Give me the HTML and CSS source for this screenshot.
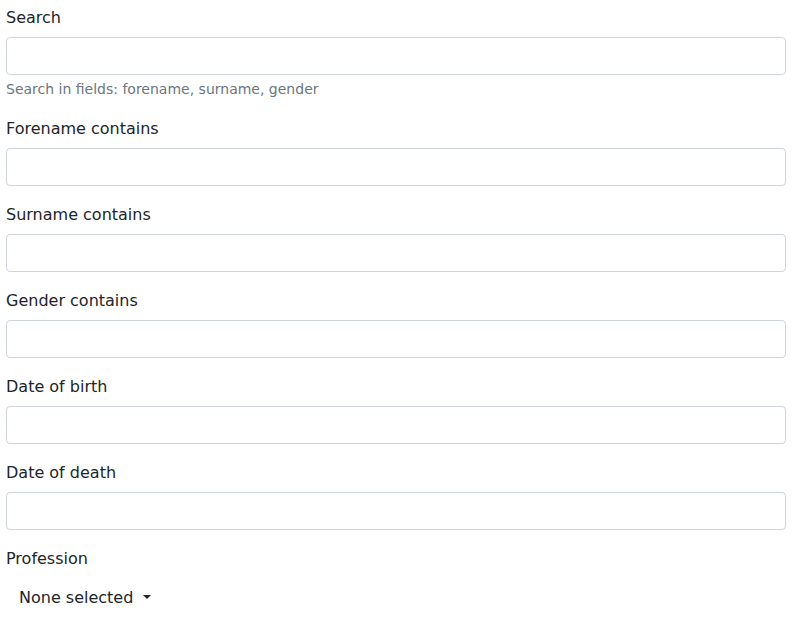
FILE: index.html
```html
<!DOCTYPE html>
<html lang="en">
<head>
<meta charset="utf-8">
<title>Filter</title>
<link rel="stylesheet" href="styles.css">
</head>
<body>
<form class="filter-form">
  <div class="field">
    <label class="field-label" for="search">Search</label>
    <input class="field-input" id="search" type="text">
    <div class="field-help">Search in fields: forename, surname, gender</div>
  </div>
  <div class="field">
    <label class="field-label" for="forename">Forename contains</label>
    <input class="field-input" id="forename" type="text">
  </div>
  <div class="field">
    <label class="field-label" for="surname">Surname contains</label>
    <input class="field-input" id="surname" type="text">
  </div>
  <div class="field">
    <label class="field-label" for="gender">Gender contains</label>
    <input class="field-input" id="gender" type="text">
  </div>
  <div class="field">
    <label class="field-label" for="dob">Date of birth</label>
    <input class="field-input" id="dob" type="text">
  </div>
  <div class="field">
    <label class="field-label" for="dod">Date of death</label>
    <input class="field-input" id="dod" type="text">
  </div>
  <div class="field">
    <label class="field-label">Profession</label>
    <div class="select-wrap">
      <button type="button" class="select-toggle">None selected</button>
    </div>
  </div>
</form>
</body>
</html>
```

FILE: styles.css
```css
* { box-sizing: border-box; }

html, body {
  margin: 0;
  padding: 0;
  background: #fff;
}

body {
  font-family: "DejaVu Sans", sans-serif;
  font-size: 16px;
  line-height: 1.5;
  color: #212529;
}

.filter-form {
  padding: 5px 7px 0 6px;
}

.field {
  margin-bottom: 16px;
}

.field-label {
  display: block;
  padding-top: 1px;
  height: 31px;
  margin-bottom: 1px;
}

.field-input {
  display: block;
  width: 100%;
  height: 38px;
  padding: 6px 12px;
  font: inherit;
  color: #212529;
  background: #fff;
  border: 1px solid #ced4da;
  border-radius: 4px;
}

.field-help {
  margin-top: 4px;
  font-size: 14px;
  line-height: 1.5;
  color: #6c757d;
}

.select-wrap {
  display: block;
  padding-top: 1px;
}

.select-toggle {
  display: inline-block;
  padding: 6px 12px;
  font: inherit;
  line-height: 24px;
  color: #212529;
  background: transparent;
  border: 1px solid transparent;
  border-radius: 4px;
  cursor: pointer;
}

.select-toggle::after {
  content: "";
  display: inline-block;
  margin-left: 0.6em;
  vertical-align: 0.255em;
  border-top: 0.3em solid;
  border-right: 0.3em solid transparent;
  border-left: 0.3em solid transparent;
  border-bottom: 0;
}
```
